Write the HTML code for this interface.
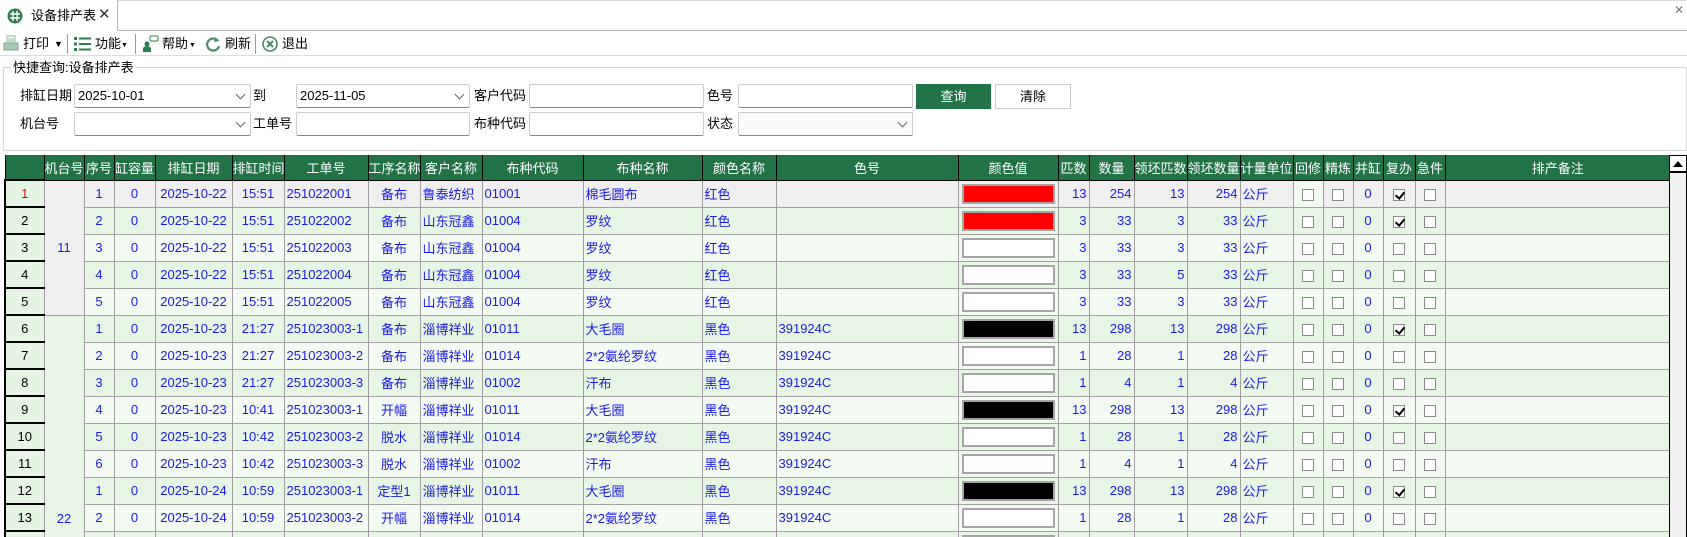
<!DOCTYPE html>
<html><head><meta charset="utf-8">
<style>
*{box-sizing:border-box;margin:0;padding:0}
body{width:1687px;height:537px;overflow:hidden;background:#fff;font-family:"Liberation Sans","Noto Sans CJK SC",sans-serif;font-size:13px;color:#000;position:relative}
.abs{position:absolute}
.tabbar{left:0;top:0;width:1687px;height:31px;border-bottom:1px solid #b8b8b8;border-top:1px solid #ddd}
.tab{left:0;top:0;width:118px;height:31px;background:#fff;border-right:1px solid #b8b8b8;border-bottom:1px solid #fff}
.lbl{position:absolute;font-size:13px;line-height:16px;white-space:nowrap}
.sep{position:absolute;top:34px;width:1px;height:20px;background:#999}
.inp{position:absolute;height:24px;border:1px solid #ccc;border-bottom:1px solid #888;background:#fff;border-radius:2px;font-size:13px;line-height:22px;padding-left:3px}
.chev{position:absolute;right:6px;top:6px;width:7px;height:7px;border-right:1px solid #666;border-bottom:1px solid #666;transform:rotate(45deg)}
.grid{left:4px;top:155px;width:1665px;height:382px;overflow:hidden}
table{border-collapse:collapse;table-layout:fixed;width:1665px}
th{background:#217346;color:#fff;font-weight:normal;height:25px;border-left:1px solid #000;border-bottom:1px solid #000;font-size:13px;padding:0;white-space:nowrap;overflow:hidden}
td{height:27px;border:1px solid #a0a0a0;color:#1a1ae6;font-size:13px;padding:0 2px;white-space:nowrap;overflow:hidden;text-align:center}
tr.a td{background:#e7f5e4}
tr.b td{background:#f3faf1}
tr.s td{background:#efefef}
td.rh{background:#e6f4e4 !important;color:#000;border-left:2px solid #000;border-top:2px solid #000;border-bottom:2px solid #000;border-right:1px solid #a0a0a0}
td.l{text-align:left}
td.r{text-align:right}
td.cv{padding:3px 3px}
.sw{height:20px;border:2px solid #a6a6a6}
.cb{display:inline-block;width:12px;height:12px;border:1px solid #8a8a8a;background:#fff;vertical-align:middle;position:relative}
.cb.k:after{content:"";position:absolute;left:3px;top:0px;width:4px;height:7px;border-right:2px solid #000;border-bottom:2px solid #000;transform:rotate(40deg)}
</style></head><body>
<div class="abs tabbar"></div>
<div class="abs tab">
<svg class="abs" style="left:7px;top:8px" width="16" height="16" viewBox="0 0 16 16"><circle cx="8" cy="8" r="7.5" fill="#2e7d4f"/><path d="M3 6h10M3 10h10M6 3v10M10 3v10" stroke="#fff" stroke-width="1.4"/></svg>
<span class="lbl" style="left:31px;top:8px">设备排产表</span>
<span class="lbl" style="left:98px;top:7px;font-size:15px;color:#333">✕</span>
</div>
<span class="lbl" style="left:1674px;top:2px;font-size:12px;color:#777">✕</span>
<!-- toolbar -->
<svg class="abs" style="left:3px;top:35px" width="16" height="17" viewBox="0 0 16 17"><rect x="4" y="1" width="8" height="7" fill="#fff" stroke="#8fb69c"/><rect x="1" y="8" width="14" height="7" fill="#a9c9b3" stroke="#7fa58c"/><path d="M5 4h6M5 6h6" stroke="#8fb69c"/></svg>
<span class="lbl" style="left:23px;top:36px">打印</span>
<span class="lbl" style="left:54px;top:36px;font-size:9px">▼</span>
<div class="sep" style="left:67px"></div>
<svg class="abs" style="left:74px;top:37px" width="17" height="14" viewBox="0 0 17 14"><g fill="#2e7d4f"><rect x="0" y="0" width="3" height="3"/><rect x="0" y="5.5" width="3" height="3"/><rect x="0" y="11" width="3" height="3"/><rect x="5" y="0.5" width="12" height="2"/><rect x="5" y="6" width="12" height="2"/><rect x="5" y="11.5" width="12" height="2"/></g></svg>
<span class="lbl" style="left:95px;top:36px">功能</span>
<span class="lbl" style="left:121px;top:38px;font-size:7px">▼</span>
<div class="sep" style="left:135px"></div>
<svg class="abs" style="left:142px;top:35px" width="17" height="17" viewBox="0 0 17 17"><circle cx="5" cy="9" r="2.5" fill="#2e7d4f"/><path d="M1 17v-3c0-2 2-3 4-3s4 1 4 3v3z" fill="#2e7d4f"/><rect x="8" y="1" width="8" height="5" rx="1" fill="#fff" stroke="#2e7d4f"/></svg>
<span class="lbl" style="left:162px;top:36px">帮助</span>
<span class="lbl" style="left:189px;top:38px;font-size:7px">▼</span>
<svg class="abs" style="left:205px;top:36px" width="16" height="16" viewBox="0 0 16 16"><path d="M13 5A6 6 0 1 0 14 10" fill="none" stroke="#4a8a68" stroke-width="2.2"/><path d="M10 1l4 4-5 1z" fill="#4a8a68"/></svg>
<span class="lbl" style="left:225px;top:36px">刷新</span>
<div class="sep" style="left:255px"></div>
<svg class="abs" style="left:262px;top:36px" width="16" height="16" viewBox="0 0 16 16"><circle cx="8" cy="8" r="7" fill="none" stroke="#4a8a68" stroke-width="1.6"/><path d="M5 5l6 6M11 5l-6 6" stroke="#4a8a68" stroke-width="2"/></svg>
<span class="lbl" style="left:282px;top:36px">退出</span>
<div class="abs" style="left:0;top:55px;width:1687px;height:1px;background:#ddd"></div>
<!-- group -->
<div class="abs" style="left:3px;top:67px;width:1684px;height:84px;border:1px solid #d6d6d6"></div>
<span class="lbl" style="left:11px;top:60px;background:#fff;padding:0 2px">快捷查询:设备排产表</span>
<span class="lbl" style="left:20px;top:88px">排缸日期</span>
<div class="inp" style="left:74px;top:84px;width:177px">2025-10-01<span class="chev"></span></div>
<span class="lbl" style="left:253px;top:88px">到</span>
<div class="inp" style="left:296px;top:84px;width:174px">2025-11-05<span class="chev"></span></div>
<span class="lbl" style="left:474px;top:88px">客户代码</span>
<div class="inp" style="left:529px;top:84px;width:175px"></div>
<span class="lbl" style="left:707px;top:88px">色号</span>
<div class="inp" style="left:738px;top:84px;width:175px"></div>
<div class="abs" style="left:916px;top:84px;width:75px;height:25px;background:#217346;color:#fff;text-align:center;line-height:25px">查询</div>
<div class="abs" style="left:995px;top:84px;width:76px;height:25px;border:1px solid #ccc;text-align:center;line-height:23px">清除</div>
<span class="lbl" style="left:20px;top:116px">机台号</span>
<div class="inp" style="left:74px;top:112px;width:177px"><span class="chev"></span></div>
<span class="lbl" style="left:253px;top:116px">工单号</span>
<div class="inp" style="left:296px;top:112px;width:174px"></div>
<span class="lbl" style="left:474px;top:116px">布种代码</span>
<div class="inp" style="left:529px;top:112px;width:175px"></div>
<span class="lbl" style="left:707px;top:116px">状态</span>
<div class="inp" style="left:738px;top:112px;width:175px;background:#fafafa"><span class="chev"></span></div>
<!-- grid -->
<div class="abs grid"><table>
<colgroup><col style="width:39px"><col style="width:40px"><col style="width:30px"><col style="width:41px"><col style="width:77px"><col style="width:52px"><col style="width:84px"><col style="width:52px"><col style="width:62px"><col style="width:101px"><col style="width:119px"><col style="width:74px"><col style="width:182px"><col style="width:100px"><col style="width:31px"><col style="width:45px"><col style="width:53px"><col style="width:53px"><col style="width:53px"><col style="width:30px"><col style="width:30px"><col style="width:30px"><col style="width:32px"><col style="width:30px"><col style="width:225px"></colgroup>
<tr><th></th><th>机台号</th><th>序号</th><th>缸容量</th><th>排缸日期</th><th>排缸时间</th><th>工单号</th><th>工序名称</th><th>客户名称</th><th>布种代码</th><th>布种名称</th><th>颜色名称</th><th>色号</th><th>颜色值</th><th>匹数</th><th>数量</th><th>领坯匹数</th><th>领坯数量</th><th>计量单位</th><th>回修</th><th>精炼</th><th>并缸</th><th>复办</th><th>急件</th><th>排产备注</th></tr>
<tr class="s"><td class="rh" style="color:#e00000">1</td><td rowspan="5" style="background:#efefef">11</td><td>1</td><td>0</td><td>2025-10-22</td><td>15:51</td><td class="l">251022001</td><td>备布</td><td class="l">鲁泰纺织</td><td class="l">01001</td><td class="l">棉毛圆布</td><td class="l">红色</td><td class="l"></td><td class="cv"><div class="sw" style="background:#f00"></div></td><td class="r">13</td><td class="r">254</td><td class="r">13</td><td class="r">254</td><td class="l">公斤</td><td style="background:#f3faf1"><span class="cb"></span></td><td><span class="cb"></span></td><td>0</td><td><span class="cb k"></span></td><td><span class="cb"></span></td><td></td></tr>
<tr class="a"><td class="rh">2</td><td>2</td><td>0</td><td>2025-10-22</td><td>15:51</td><td class="l">251022002</td><td>备布</td><td class="l">山东冠鑫</td><td class="l">01004</td><td class="l">罗纹</td><td class="l">红色</td><td class="l"></td><td class="cv"><div class="sw" style="background:#f00"></div></td><td class="r">3</td><td class="r">33</td><td class="r">3</td><td class="r">33</td><td class="l">公斤</td><td><span class="cb"></span></td><td><span class="cb"></span></td><td>0</td><td><span class="cb k"></span></td><td><span class="cb"></span></td><td></td></tr>
<tr class="b"><td class="rh">3</td><td>3</td><td>0</td><td>2025-10-22</td><td>15:51</td><td class="l">251022003</td><td>备布</td><td class="l">山东冠鑫</td><td class="l">01004</td><td class="l">罗纹</td><td class="l">红色</td><td class="l"></td><td class="cv"><div class="sw" style="background:#fff"></div></td><td class="r">3</td><td class="r">33</td><td class="r">3</td><td class="r">33</td><td class="l">公斤</td><td><span class="cb"></span></td><td><span class="cb"></span></td><td>0</td><td><span class="cb"></span></td><td><span class="cb"></span></td><td></td></tr>
<tr class="a"><td class="rh">4</td><td>4</td><td>0</td><td>2025-10-22</td><td>15:51</td><td class="l">251022004</td><td>备布</td><td class="l">山东冠鑫</td><td class="l">01004</td><td class="l">罗纹</td><td class="l">红色</td><td class="l"></td><td class="cv"><div class="sw" style="background:#fff"></div></td><td class="r">3</td><td class="r">33</td><td class="r">5</td><td class="r">33</td><td class="l">公斤</td><td><span class="cb"></span></td><td><span class="cb"></span></td><td>0</td><td><span class="cb"></span></td><td><span class="cb"></span></td><td></td></tr>
<tr class="b"><td class="rh">5</td><td>5</td><td>0</td><td>2025-10-22</td><td>15:51</td><td class="l">251022005</td><td>备布</td><td class="l">山东冠鑫</td><td class="l">01004</td><td class="l">罗纹</td><td class="l">红色</td><td class="l"></td><td class="cv"><div class="sw" style="background:#fff"></div></td><td class="r">3</td><td class="r">33</td><td class="r">3</td><td class="r">33</td><td class="l">公斤</td><td><span class="cb"></span></td><td><span class="cb"></span></td><td>0</td><td><span class="cb"></span></td><td><span class="cb"></span></td><td></td></tr>
<tr class="a"><td class="rh">6</td><td rowspan="9" style="background:#e7f5e4;vertical-align:top;padding-top:195px">22</td><td>1</td><td>0</td><td>2025-10-23</td><td>21:27</td><td class="l">251023003-1</td><td>备布</td><td class="l">淄博祥业</td><td class="l">01011</td><td class="l">大毛圈</td><td class="l">黑色</td><td class="l">391924C</td><td class="cv"><div class="sw" style="background:#000"></div></td><td class="r">13</td><td class="r">298</td><td class="r">13</td><td class="r">298</td><td class="l">公斤</td><td><span class="cb"></span></td><td><span class="cb"></span></td><td>0</td><td><span class="cb k"></span></td><td><span class="cb"></span></td><td></td></tr>
<tr class="b"><td class="rh">7</td><td>2</td><td>0</td><td>2025-10-23</td><td>21:27</td><td class="l">251023003-2</td><td>备布</td><td class="l">淄博祥业</td><td class="l">01014</td><td class="l">2*2氨纶罗纹</td><td class="l">黑色</td><td class="l">391924C</td><td class="cv"><div class="sw" style="background:#fff"></div></td><td class="r">1</td><td class="r">28</td><td class="r">1</td><td class="r">28</td><td class="l">公斤</td><td><span class="cb"></span></td><td><span class="cb"></span></td><td>0</td><td><span class="cb"></span></td><td><span class="cb"></span></td><td></td></tr>
<tr class="a"><td class="rh">8</td><td>3</td><td>0</td><td>2025-10-23</td><td>21:27</td><td class="l">251023003-3</td><td>备布</td><td class="l">淄博祥业</td><td class="l">01002</td><td class="l">汗布</td><td class="l">黑色</td><td class="l">391924C</td><td class="cv"><div class="sw" style="background:#fff"></div></td><td class="r">1</td><td class="r">4</td><td class="r">1</td><td class="r">4</td><td class="l">公斤</td><td><span class="cb"></span></td><td><span class="cb"></span></td><td>0</td><td><span class="cb"></span></td><td><span class="cb"></span></td><td></td></tr>
<tr class="b"><td class="rh">9</td><td>4</td><td>0</td><td>2025-10-23</td><td>10:41</td><td class="l">251023003-1</td><td>开幅</td><td class="l">淄博祥业</td><td class="l">01011</td><td class="l">大毛圈</td><td class="l">黑色</td><td class="l">391924C</td><td class="cv"><div class="sw" style="background:#000"></div></td><td class="r">13</td><td class="r">298</td><td class="r">13</td><td class="r">298</td><td class="l">公斤</td><td><span class="cb"></span></td><td><span class="cb"></span></td><td>0</td><td><span class="cb k"></span></td><td><span class="cb"></span></td><td></td></tr>
<tr class="a"><td class="rh">10</td><td>5</td><td>0</td><td>2025-10-23</td><td>10:42</td><td class="l">251023003-2</td><td>脱水</td><td class="l">淄博祥业</td><td class="l">01014</td><td class="l">2*2氨纶罗纹</td><td class="l">黑色</td><td class="l">391924C</td><td class="cv"><div class="sw" style="background:#fff"></div></td><td class="r">1</td><td class="r">28</td><td class="r">1</td><td class="r">28</td><td class="l">公斤</td><td><span class="cb"></span></td><td><span class="cb"></span></td><td>0</td><td><span class="cb"></span></td><td><span class="cb"></span></td><td></td></tr>
<tr class="b"><td class="rh">11</td><td>6</td><td>0</td><td>2025-10-23</td><td>10:42</td><td class="l">251023003-3</td><td>脱水</td><td class="l">淄博祥业</td><td class="l">01002</td><td class="l">汗布</td><td class="l">黑色</td><td class="l">391924C</td><td class="cv"><div class="sw" style="background:#fff"></div></td><td class="r">1</td><td class="r">4</td><td class="r">1</td><td class="r">4</td><td class="l">公斤</td><td><span class="cb"></span></td><td><span class="cb"></span></td><td>0</td><td><span class="cb"></span></td><td><span class="cb"></span></td><td></td></tr>
<tr class="a"><td class="rh">12</td><td>1</td><td>0</td><td>2025-10-24</td><td>10:59</td><td class="l">251023003-1</td><td>定型1</td><td class="l">淄博祥业</td><td class="l">01011</td><td class="l">大毛圈</td><td class="l">黑色</td><td class="l">391924C</td><td class="cv"><div class="sw" style="background:#000"></div></td><td class="r">13</td><td class="r">298</td><td class="r">13</td><td class="r">298</td><td class="l">公斤</td><td><span class="cb"></span></td><td><span class="cb"></span></td><td>0</td><td><span class="cb k"></span></td><td><span class="cb"></span></td><td></td></tr>
<tr class="b"><td class="rh">13</td><td>2</td><td>0</td><td>2025-10-24</td><td>10:59</td><td class="l">251023003-2</td><td>开幅</td><td class="l">淄博祥业</td><td class="l">01014</td><td class="l">2*2氨纶罗纹</td><td class="l">黑色</td><td class="l">391924C</td><td class="cv"><div class="sw" style="background:#fff"></div></td><td class="r">1</td><td class="r">28</td><td class="r">1</td><td class="r">28</td><td class="l">公斤</td><td><span class="cb"></span></td><td><span class="cb"></span></td><td>0</td><td><span class="cb"></span></td><td><span class="cb"></span></td><td></td></tr>
<tr class="a"><td class="rh"></td><td></td><td></td><td></td><td></td><td></td><td></td><td></td><td></td><td></td><td></td><td></td><td class="cv"><div class="sw" style="background:#fff"></div></td><td></td><td></td><td></td><td></td><td></td><td></td><td></td><td></td><td></td><td></td><td></td></tr>
</table></div>
<!-- scrollbar -->
<div class="abs" style="left:1669px;top:155px;width:18px;height:382px;background:#f0f0f0;border:1px solid #000;border-bottom:none"></div>
<div class="abs" style="left:1669px;top:155px;width:18px;height:18px;background:#fff;border:1px solid #000;border-bottom:2px solid #000"></div>
<div class="abs" style="left:1673px;top:161px;width:0;height:0;border-left:5px solid transparent;border-right:5px solid transparent;border-bottom:6px solid #000"></div>
</body></html>
